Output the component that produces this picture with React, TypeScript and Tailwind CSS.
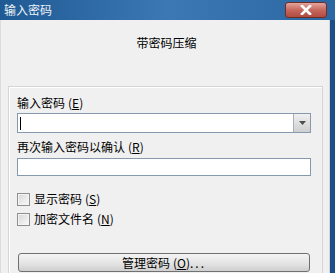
// Password dialog for archiving with a password (Vista basic theme look).

const font = "font-['SimSun','Noto_Sans_CJK_SC',sans-serif]";

function Mnemonic({ k }: { k: string }) {
  return (
    <span className="ml-[3px]">
      (<span className="underline underline-offset-1">{k}</span>)
    </span>
  );
}

function Checkbox({ label, k }: { label: string; k: string }) {
  return (
    <label className="flex h-[14px] items-center">
      <span className="h-[13px] w-[13px] border border-[#8e8f8f] bg-gradient-to-br from-[#d6d6d6] to-[#fbfbfb] shadow-[inset_0_0_0_1px_#f4f4f4]" />
      <span className="ml-[4px] text-[12px] leading-[14px] text-black">
        {label}
        <Mnemonic k={k} />
      </span>
    </label>
  );
}

export default function App() {
  return (
    <div className={`relative flex h-[273px] w-[335px] flex-col overflow-hidden bg-[#f0f0f0] ${font}`}>
      {/* title bar */}
      <div className="relative flex h-[20px] shrink-0 items-center bg-gradient-to-r from-[#1f5a94] via-[#3b78b4] to-[#2b67a3] pl-[4px]">
        <span className="text-[12px] leading-[14px] text-[#eef3f8]">输入密码</span>
        <div className="absolute right-[8px] top-[2px] flex h-[16px] w-[42px] items-center justify-center rounded-[3px] border border-[#6e2e28] bg-gradient-to-b from-[#e4a49c] via-[#c7675d] to-[#b14b40]">
          <svg width="12" height="10" viewBox="0 0 12 10">
            <path d="M2 1 L10 9 M10 1 L2 9" stroke="#fff" strokeWidth="2.6" strokeLinecap="square" />
          </svg>
        </div>
      </div>

      <div className="flex flex-1 border-l border-l-[#dcdcdc] pl-[3px]">
        <div className="flex flex-1 flex-col">
          <div className="pt-[16px] text-center text-[12px] leading-[14px] text-black">带密码压缩</div>

          {/* group panel */}
          <div className="ml-[4px] mr-[6px] mt-[36px] flex flex-1 flex-col border border-b-0 border-[#d5d5d5] pl-[8px] pr-[10px] shadow-[inset_1px_1px_0_#ffffff]">
            <div className="mt-[9px] text-[12px] leading-[14px] text-black">
              输入密码
              <Mnemonic k="E" />
            </div>
            <div className="mt-[3px] flex h-[20px] w-[294px] items-center border border-[#8799ad] bg-white">
              <div className="ml-[2px] h-[13px] w-px bg-black" />
              <div className="ml-auto flex h-full w-[17px] items-center justify-center border-l border-[#a6b0bc] bg-gradient-to-b from-[#f0f0f0] to-[#cfcfcf]">
                <svg width="7" height="4" viewBox="0 0 7 4">
                  <path d="M0 0 H7 L3.5 4 Z" fill="#4d4d4d" />
                </svg>
              </div>
            </div>

            <div className="mt-[7px] text-[12px] leading-[14px] text-black">
              再次输入密码以确认
              <Mnemonic k="R" />
            </div>
            <div className="mt-[4px] h-[18px] w-[294px] border border-[#8799ad] bg-white" />

            <div className="mt-[16px] flex flex-col gap-[6px]">
              <Checkbox label="显示密码" k="S" />
              <Checkbox label="加密文件名" k="N" />
            </div>

            <button className="ml-[1px] mt-[27px] flex h-[19px] w-[292px] items-center justify-center rounded-[3px] border border-[#707070] bg-gradient-to-b from-[#f3f3f3] via-[#e6e6e6] to-[#cfcfcf] text-[12px] leading-[14px] text-black">
              管理密码
              <Mnemonic k="O" />
              <span className="tracking-[2px]">...</span>
            </button>
          </div>
        </div>
        {/* right frame */}
        <div className="w-[6px] shrink-0 border-l border-l-[#cfd6de] bg-[#1d4f86]" />
      </div>
    </div>
  );
}
